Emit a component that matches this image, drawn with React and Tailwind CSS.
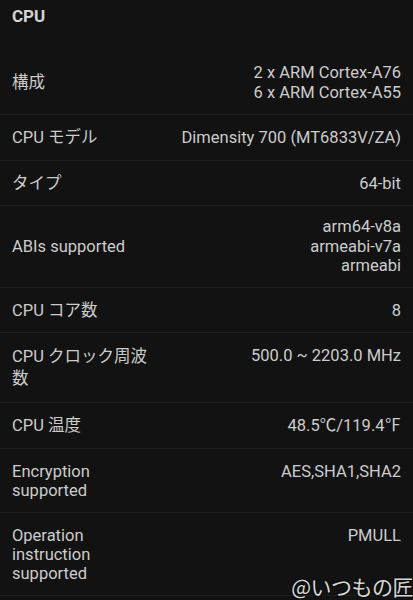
import React from 'react';

const rows = [
  { label: '構成', value: ['2 x ARM Cortex-A76', '6 x ARM Cortex-A55'], center: true },
  { label: 'CPU モデル', value: ['Dimensity 700 (MT6833V/ZA)'] },
  { label: 'タイプ', value: ['64-bit'] },
  { label: 'ABIs supported', value: ['arm64-v8a', 'armeabi-v7a', 'armeabi'], center: true, tight: true },
  { label: 'CPU コア数', value: ['8'] },
  { label: 'CPU クロック周波数', value: ['500.0 ~ 2203.0 MHz'], tall: true },
  { label: 'CPU 温度', value: ['48.5℃/119.4℉'] },
  { label: 'Encryption supported', value: ['AES,SHA1,SHA2'] },
  { label: 'Operation instruction supported', value: ['PMULL'] },
];

export default function App() {
  return (
    <div
      className="relative w-[413px] h-[600px] overflow-hidden bg-[#121212] text-[#cccccc]"
      style={{ fontFamily: 'Roboto, "Noto Sans CJK JP", sans-serif' }}
    >
      {/* Section header */}
      <div className="px-3 pt-[6px] h-[50px] text-[17px] font-bold leading-5 text-[#d4d4d4]">CPU</div>

      <div className="flex flex-col">
        {rows.map((row, i) => (
          <div
            key={i}
            className={
              'flex justify-between px-3 border-b border-[#1e1e1e] text-[16.5px] leading-[19px] ' +
              (row.tight ? 'py-[11px] ' : 'pt-[13px] pb-[12px] ') +
              (row.center ? 'items-center' : 'items-start')
            }
          >
            <span className={'w-[140px] shrink-0 ' + (row.tall ? 'leading-[22px]' : '')}>{row.label}</span>
            <div className="flex flex-col items-end text-right leading-[19.5px]">
              {row.value.map((v) => (
                <span key={v}>{v}</span>
              ))}
            </div>
          </div>
        ))}
      </div>

      {/* Watermark */}
      <div
        className="absolute right-0 bottom-[2px] text-[21px] leading-6 text-[#d8d8d8] tracking-tight"
        style={{ fontFamily: '"Noto Sans CJK JP", sans-serif', textShadow: '0 0 2px #000' }}
      >
        @いつもの匠
      </div>
    </div>
  );
}
